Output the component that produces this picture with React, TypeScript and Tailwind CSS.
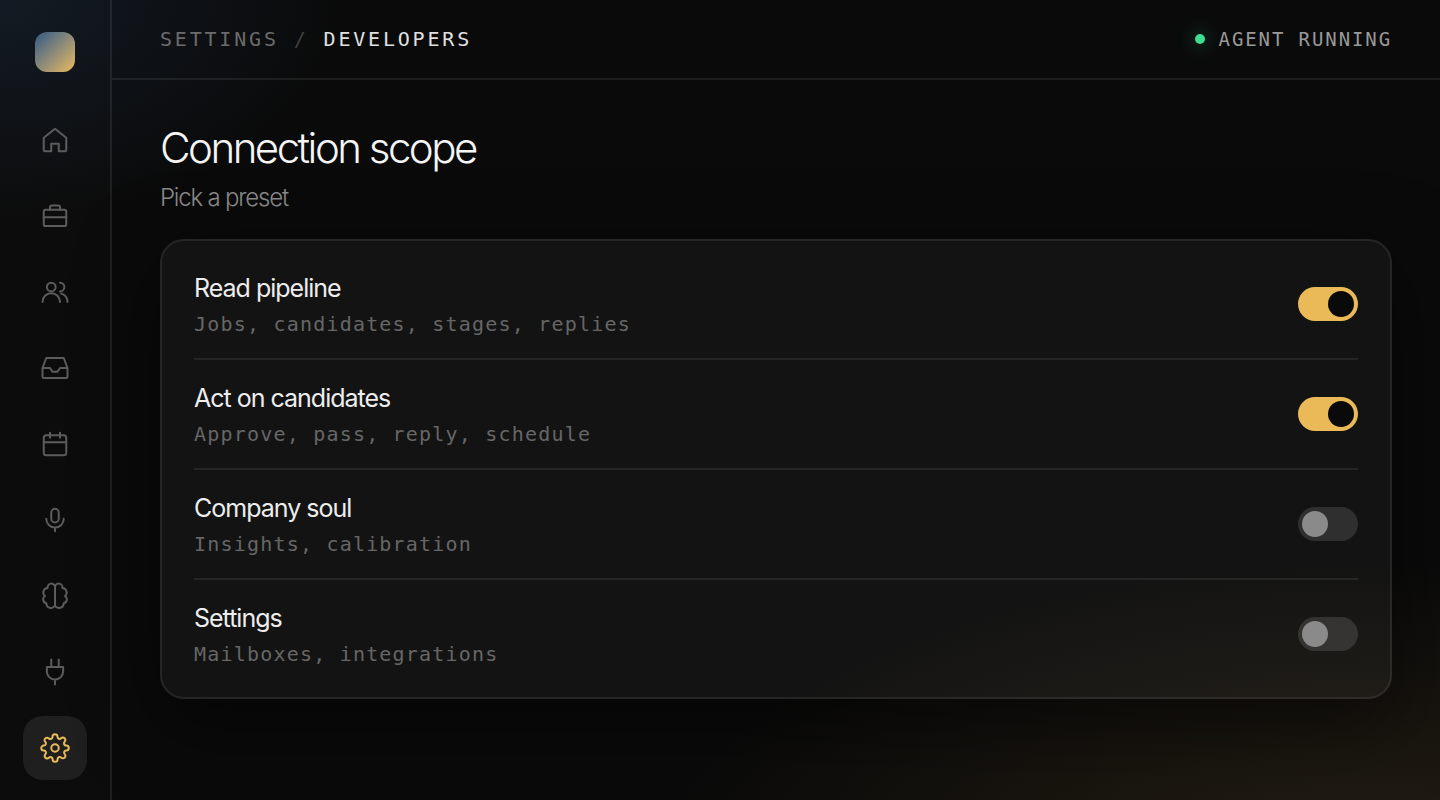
import { useState, type ReactNode } from "react";

type NavItem = { id: string; label: string; icon: ReactNode };

const navItems: NavItem[] = [
  {
    id: "home",
    label: "Home",
    icon: <path d="M12 3l9 7.2V20a1 1 0 0 1-1 1h-5v-6H9v6H4a1 1 0 0 1-1-1v-9.8Z" />,
  },
  {
    id: "jobs",
    label: "Jobs",
    icon: (
      <>
        <rect x="3" y="7" width="18" height="13" rx="1.5" />
        <path d="M8 7V5a1.500 1.500 0 0 1 1.500-1.500h5A1.500 1.500 0 0 1 16 5v2M3 13h18" />
      </>
    ),
  },
  {
    id: "candidates",
    label: "Candidates",
    icon: (
      <>
        <circle cx="9" cy="8" r="3.5" />
        <path d="M2 20a7 7 0 0 1 14 0M16 4.500a3.500 3.500 0 0 1 0 7M17 13.300a7 7 0 0 1 5 6.700" />
      </>
    ),
  },
  {
    id: "inbox",
    label: "Inbox",
    icon: <path d="M2 12h6l2 3h4l2-3h6M5 4h14l3 8v7a1 1 0 0 1-1 1H3a1 1 0 0 1-1-1v-7Z" />,
  },
  {
    id: "calendar",
    label: "Calendar",
    icon: (
      <>
        <rect x="3" y="5" width="18" height="16" rx="2" />
        <path d="M3 10.500h18M8 3v4M16 3v4" />
      </>
    ),
  },
  {
    id: "interviews",
    label: "Interviews",
    icon: (
      <>
        <rect x="9" y="3" width="6" height="11" rx="3" />
        <path d="M5 11a7 7 0 0 0 14 0M12 18v3" />
      </>
    ),
  },
  {
    id: "soul",
    label: "Company soul",
    icon: (
      <>
        <path d="M12 4.500A3 3 0 0 0 6.100 5.600 3.600 3.600 0 0 0 4 12 3.200 3.200 0 0 0 5 17.800 3.800 3.800 0 0 0 12 19.800" />
        <path d="M12 4.500A3 3 0 0 1 17.900 5.600 3.600 3.600 0 0 1 20 12 3.200 3.200 0 0 1 19 17.800 3.800 3.800 0 0 1 12 19.800Z" />
      </>
    ),
  },
  {
    id: "integrations",
    label: "Integrations",
    icon: <path d="M9 2v6M15 2v6M5.500 8h13v3.500a6.500 6.500 0 0 1-13 0ZM12 18v4" />,
  },
  {
    id: "settings",
    label: "Settings",
    icon: (
      <>
        <circle cx="12" cy="12" r="3" />
        <path d="M19.400 15a1.650 1.650 0 0 0 .33 1.820l.06.06a2 2 0 0 1 0 2.830 2 2 0 0 1-2.830 0l-.06-.06a1.650 1.650 0 0 0-1.820-.33 1.650 1.650 0 0 0-1 1.510V21a2 2 0 0 1-2 2 2 2 0 0 1-2-2v-.09A1.650 1.650 0 0 0 9 19.400a1.650 1.650 0 0 0-1.820.33l-.06.06a2 2 0 0 1-2.830 0 2 2 0 0 1 0-2.830l.06-.06a1.650 1.650 0 0 0 .33-1.820 1.650 1.650 0 0 0-1.510-1H3a2 2 0 0 1-2-2 2 2 0 0 1 2-2h.09A1.650 1.650 0 0 0 4.600 9a1.650 1.650 0 0 0-.33-1.820l-.06-.06a2 2 0 0 1 0-2.830 2 2 0 0 1 2.830 0l.06.06a1.650 1.650 0 0 0 1.820.33H9a1.650 1.650 0 0 0 1-1.510V3a2 2 0 0 1 2-2 2 2 0 0 1 2 2v.09a1.650 1.650 0 0 0 1 1.510 1.650 1.650 0 0 0 1.820-.33l.06-.06a2 2 0 0 1 2.830 0 2 2 0 0 1 0 2.830l-.06.06a1.650 1.650 0 0 0-.33 1.820V9a1.650 1.650 0 0 0 1.510 1H21a2 2 0 0 1 2 2 2 2 0 0 1-2 2h-.09a1.650 1.650 0 0 0-1.510 1z" />
      </>
    ),
  },
];

const scopes = [
  { id: "read", title: "Read pipeline", detail: "Jobs, candidates, stages, replies", on: true },
  { id: "act", title: "Act on candidates", detail: "Approve, pass, reply, schedule", on: true },
  { id: "company", title: "Company soul", detail: "Insights, calibration", on: false },
  { id: "admin", title: "Settings", detail: "Mailboxes, integrations", on: false },
];

function Sidebar() {
  return (
    <aside className="flex w-28 shrink-0 flex-col items-center gap-9 border-r-2 border-white/8 bg-white/1 pt-8 pb-5">
      <div className="size-10 shrink-0 rounded-xl bg-linear-135 from-[#2f5880] to-[#ebba58]" />
      <nav aria-label="Main" className="flex flex-col gap-3">
        {navItems.map((item) => {
          const active = item.id === "settings";
          return (
            <a
              key={item.id}
              href={`#${item.id}`}
              aria-label={item.label}
              aria-current={active ? "page" : undefined}
              className={
                active
                  ? "flex size-16 items-center justify-center rounded-[20px] bg-white/8 text-[#ebba58]"
                  : "flex size-16 items-center justify-center rounded-[20px] text-[#5c5c5c]"
              }
            >
              <svg
                viewBox="0 0 24 24"
                className="size-[30px]"
                fill="none"
                stroke="currentColor"
                strokeWidth="1.6"
                strokeLinecap="round"
                strokeLinejoin="round"
                aria-hidden="true"
              >
                {item.icon}
              </svg>
            </a>
          );
        })}
      </nav>
    </aside>
  );
}

function ScopeRow({ id, title, detail, on }: (typeof scopes)[number]) {
  const [checked, setChecked] = useState(on);
  return (
    <li className="flex items-center justify-between border-b-2 border-white/8 py-[18px] last:border-b-0">
      <label htmlFor={id} className="flex flex-col">
        <span className="text-[25px] leading-10 tracking-[-0.04em] text-[#ededed]">{title}</span>
        <span className="font-['DejaVu_Sans_Mono',monospace] text-xl leading-8 tracking-[0.06em] text-[#666666]">
          {detail}
        </span>
      </label>
      <input
        id={id}
        type="checkbox"
        role="switch"
        checked={checked}
        onChange={(event) => setChecked(event.target.checked)}
        className="flex h-[34px] w-[60px] shrink-0 cursor-pointer appearance-none items-center rounded-full bg-white/12 px-1 before:size-[26px] before:rounded-full before:bg-[#8a8a8a] checked:justify-end checked:bg-[#ebba58] checked:before:bg-[#0a0a0a]"
      />
    </li>
  );
}

export default function App() {
  return (
    <div className="flex min-h-screen bg-[#0a0a0a] bg-[radial-gradient(ellipse_24%_27%_at_0%_0%,rgba(47,84,130,0.2),transparent),radial-gradient(ellipse_50%_40%_at_95%_110%,rgba(235,186,88,0.12),transparent)] font-['Inter',sans-serif] text-[#ededed]">
      <Sidebar />
      <div className="flex min-w-0 flex-1 flex-col">
        <header className="flex h-20 shrink-0 items-center justify-between border-b-2 border-white/8 px-12 font-['DejaVu_Sans_Mono',monospace]">
          <nav aria-label="Breadcrumb" className="flex gap-[15px] text-xl tracking-[0.14em]">
            <a href="#settings" className="text-[#6b6b6b]">SETTINGS</a>
            <span className="text-[#404040]">/</span>
            <span aria-current="page" className="text-[#e0e0e0]">DEVELOPERS</span>
          </nav>
          <div className="flex items-center gap-3.5 text-[19px] tracking-[0.1em] text-[#999999]">
            <span className="size-2.5 rounded-full bg-[#3ddc91] shadow-[0_0_20px_rgba(61,220,145,0.6)]" />
            AGENT RUNNING
          </div>
        </header>
        <main className="flex flex-col px-12 pt-10 pb-12">
          <h1 className="text-[42px] leading-14 font-light tracking-[-0.06em] text-[#f5f5f5]">Connection scope</h1>
          <p className="mt-1 text-2xl leading-9 font-light tracking-[-0.05em] text-[#8a8a8a]">Pick a preset</p>
          <ul className="mt-[23px] rounded-3xl border-2 border-white/8 bg-white/4 px-8 py-[9px] shadow-[0_24px_80px_rgba(0,0,0,0.5)]">
            {scopes.map((scope) => (
              <ScopeRow key={scope.id} {...scope} />
            ))}
          </ul>
        </main>
      </div>
    </div>
  );
}
